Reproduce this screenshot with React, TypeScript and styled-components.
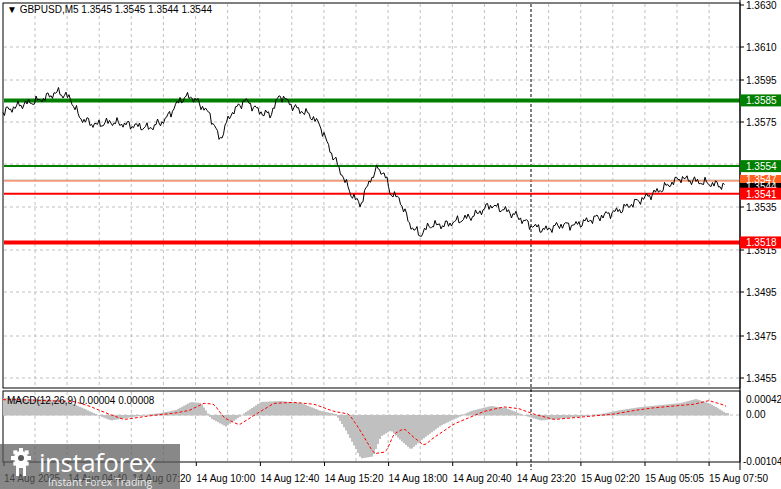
import React from "react";
import styled, { createGlobalStyle } from "styled-components";

const G = createGlobalStyle`
  html,body{margin:0;padding:0;background:#fff;}
  body{font-family:"Liberation Sans",Arial,sans-serif;}
`;

const Page = styled.div`
  position: relative; width: 781px; height: 489px; background:#fff; overflow:hidden;
  font-family: "Liberation Sans", sans-serif; font-size: 10px; color:#000;
`;
const Svg = styled.svg`display:block;`;
const Logo = styled.div`
  position:absolute; left:0; top:444px; width:180px; height:45px;
  background: rgba(90,90,90,0.72); color:#fff; display:flex; flex-direction:column; align-items:flex-start;
  padding:3px 0 0 6px; box-sizing:border-box;
`;
const LogoRow = styled.div`display:flex; align-items:center; gap:3px;`;
const LogoText = styled.span`font-family:"Open Sans",sans-serif; font-size:26px; line-height:28px; letter-spacing:-0.5px; font-weight:400;`;
const LogoSub = styled.span`font-family:"Open Sans",sans-serif; font-size:10.5px; margin-left:42px; margin-top:-2px; opacity:0.85;`;

const py = (p: number) => 5 + (1.363 - p) * 21200;

const key: [number, number][] = [[3,112],[20,105],[40,100],[58,92],[70,98],[80,118],[95,125],[110,122],[130,125],[150,128],[165,120],[180,100],[190,96],[200,104],[210,115],[220,140],[230,115],[245,100],[260,112],[270,115],[280,95],[295,108],[310,115],[320,125],[330,150],[340,170],[350,192],[360,205],[370,180],[378,168],[385,175],[390,192],[400,200],[410,225],[420,235],[430,225],[445,225],[460,220],[475,215],[490,205],[505,210],[515,215],[530,225],[545,230],[560,225],[575,225],[590,220],[605,215],[620,210],[640,200],[660,190],[680,178],[700,182],[725,186]];
function interp(k: [number,number][], x: number){for(let i=0;i<k.length-1;i++){if(x>=k[i][0]&&x<=k[i+1][0]){const t=(x-k[i][0])/(k[i+1][0]-k[i][0]);return k[i][1]+t*(k[i+1][1]-k[i][1]);}}return k[k.length-1][1];}
const pricePts: string[] = [];
for (let x = 3; x <= 725; x += 1.5) {
  const j = Math.sin(x*1.7)*2.2 + Math.sin(x*0.63)*2.5 + Math.sin(x*3.1)*1.2;
  pricePts.push(`${x.toFixed(1)},${(interp(key,x)+j).toFixed(1)}`);
}
const macdKey: [number,number][] = [[3,398],[60,400],[75,405],[95,414],[110,420],[135,416],[160,413],[175,410],[190,402],[200,403],[210,418],[225,426],[245,412],[260,402],[280,401],[300,403],[320,411],[335,414],[345,430],[360,458],[372,456],[380,436],[390,430],[400,440],[410,449],[420,440],[440,425],[470,411],[490,406],[505,408],[520,414],[540,420],[560,418],[580,416],[600,414],[620,410],[640,407],[660,405],[680,403],[695,399],[710,404],[725,413]];
const Z = 415;
const bars: React.ReactNode[] = [];
for (let x = 3; x <= 727; x += 2) {
  const v = interp(macdKey, x);
  bars.push(<rect key={x} x={x} y={Math.min(v,Z)} width={2} height={Math.abs(v-Z)+0.5} fill="#c0c0c0" />);
}
const sig: string[] = [];
for (let x = 3; x <= 727; x += 3) {
  const v = interp(macdKey, Math.max(3, x - 14));
  sig.push(`${x},${(Z + (v - Z) * 0.9).toFixed(1)}`);
}

const vx = Array.from({length:23},(_,i)=>35+i*32.1);
const hy = [47, 80, 122, 164, 207, 250, 292, 336, 378];
const priceLabels: [string, number][] = [["1.3630",5],["1.3610",47],["1.3595",80],["1.3575",122],["1.3535",207],["1.3515",250],["1.3495",292],["1.3475",336],["1.3455",378]];
const times = ["14 Aug 2025","14 Aug 04:40","14 Aug 07:20","14 Aug 10:00","14 Aug 12:40","14 Aug 15:20","14 Aug 18:00","14 Aug 20:40","14 Aug 23:20","15 Aug 02:20","15 Aug 05:05","15 Aug 07:50"];
const levels: [number, string, number][] = [[1.3585,"#007f00",4],[1.3554,"#007f00",2],[1.3541,"#ff0000",2],[1.3518,"#ff0000",4]];

export default function App(){
  const R = 740;
  return (<Page><G/>
    <Svg width={781} height={489} fontFamily="'Liberation Sans', Arial, sans-serif" fontSize={10}>
      <rect x={3} y={3} width={R-3} height={385} fill="none" stroke="#000" />
      <rect x={3} y={391} width={R-3} height={71} fill="none" stroke="#000" />
      {vx.filter(x=>x<R).map(x=>(<g key={x}><line x1={x} y1={4} x2={x} y2={387} stroke="#c0c0c0" strokeDasharray="3,3"/><line x1={x} y1={392} x2={x} y2={461} stroke="#c0c0c0" strokeDasharray="3,3"/></g>))}
      {hy.map(y=>(<line key={y} x1={4} y1={y} x2={R} y2={y} stroke="#c0c0c0" strokeDasharray="3,3"/>))}
      <line x1={4} y1={Z} x2={R} y2={Z} stroke="#c0c0c0" strokeDasharray="3,3"/>
      <line x1={531} y1={4} x2={531} y2={470} stroke="#000" strokeDasharray="3,2"/>
      <line x1={4} y1={180} x2={R} y2={180} stroke="#c0c0c0"/>
      <line x1={4} y1={py(1.3547)} x2={R} y2={py(1.3547)} stroke="#ff6020" strokeWidth={1}/>
      {levels.map(([p,c,w])=>(<line key={p} x1={4} y1={py(p)} x2={R} y2={py(p)} stroke={c} strokeWidth={w}/>))}
      <polyline points={pricePts.join(" ")} fill="none" stroke="#000" strokeWidth={1}/>
      {bars}
      <polyline points={sig.join(" ")} fill="none" stroke="#ff0000" strokeDasharray="3,2"/>
      <text x={7} y={13}>▼ GBPUSD,M5  1.3545 1.3545 1.3544 1.3544</text>
      <text x={7} y={404}>MACD(12,26,9) 0.00004 0.00008</text>
      <line x1={R} y1={0} x2={R} y2={470} stroke="#000"/>
      {priceLabels.map(([t,y])=>(<g key={t}><line x1={R} y1={y} x2={R+4} y2={y} stroke="#000"/><text x={R+6} y={y+4}>{t}</text></g>))}
      <text x={R+6} y={403}>0.00042</text><text x={R+6} y={418}>0.00</text><text x={R+3} y={465}>-0.00104</text>
      <rect x={R} y={175} width={41} height={9} fill="#ff6020"/><text x={R+6} y={183} fill="#fff">1.3547</text>
      <rect x={R} y={183} width={41} height={6} fill="#000"/><text x={R+6} y={190} fill="#fff">1.3544</text>
      {levels.map(([p,c])=>(<g key={p}><rect x={R} y={py(p)-6} width={41} height={12} fill={c}/><text x={R+6} y={py(p)+4} fill="#fff">{p.toFixed(4)}</text></g>))}
      {times.map((t,i)=>(<g key={t}><line x1={4+i*64.1} y1={462} x2={4+i*64.1} y2={466} stroke="#000"/><text x={4+i*64.1} y={482}>{t}</text></g>))}
    </Svg>
    <Logo>
      <LogoRow>
        <svg width="30" height="30" viewBox="0 0 30 30"><g fill="#fff"><circle cx="15" cy="11" r="7"/>{Array.from({length:8},(_,i)=>{const a=i*Math.PI/4;return <rect key={i} x={15+Math.cos(a)*8-2} y={11+Math.sin(a)*8-2} width="4" height="4"/>;})}<rect x="10" y="17" width="3" height="12"/><rect x="17" y="17" width="3" height="12"/></g><circle cx="15" cy="11" r="3" fill="#5a5a5a"/></svg>
        <LogoText>instaforex</LogoText>
      </LogoRow>
      <LogoSub>Instant Forex Trading</LogoSub>
    </Logo>
  </Page>);
}
